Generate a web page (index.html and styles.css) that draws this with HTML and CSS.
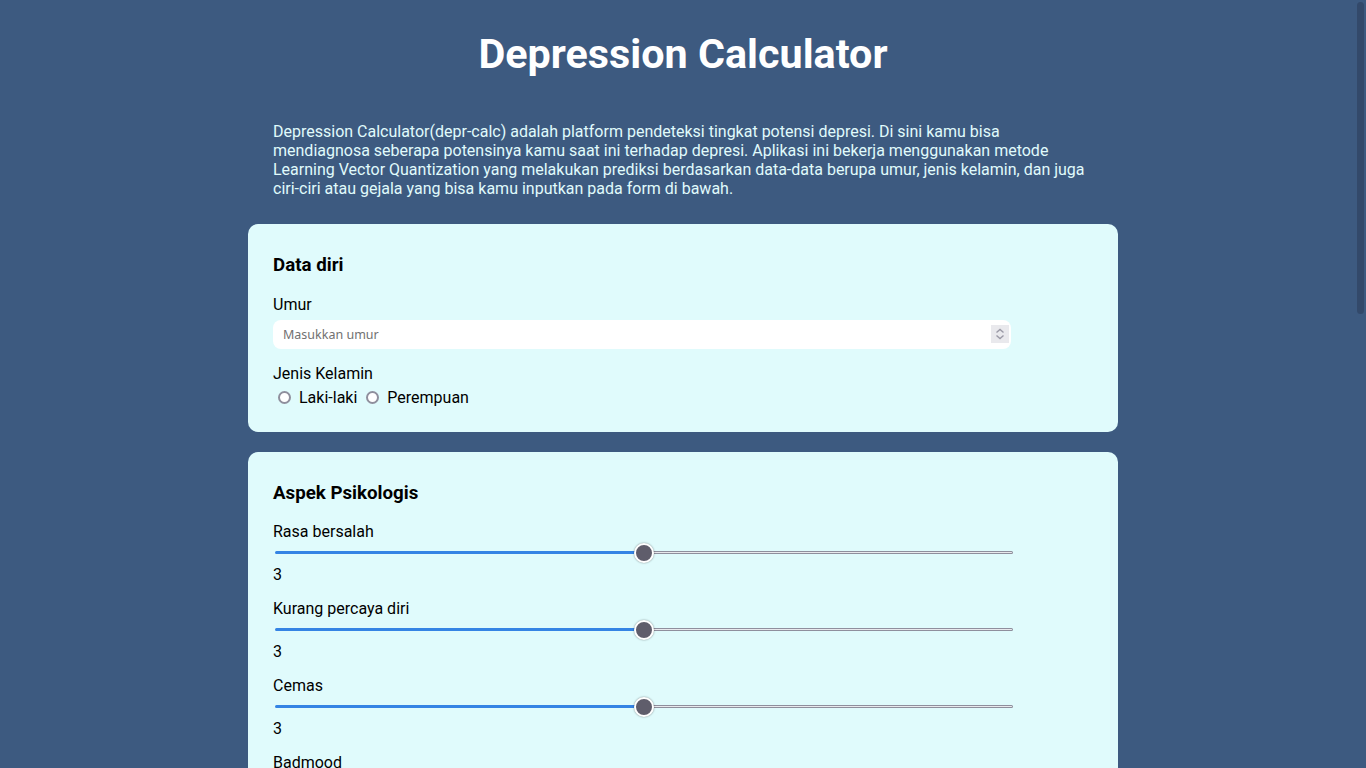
FILE: index.html
```html
<!DOCTYPE html>
<html lang="id">
<head>
<meta charset="utf-8">
<title>Depression Calculator</title>
<link rel="stylesheet" href="styles.css">
</head>
<body>
<div class="container">
  <h1 class="title">Depression Calculator</h1>
  <p class="intro">Depression Calculator(depr-calc) adalah platform pendeteksi tingkat potensi depresi. Di sini kamu bisa mendiagnosa seberapa potensinya kamu saat ini terhadap depresi. Aplikasi ini bekerja menggunakan metode Learning Vector Quantization yang melakukan prediksi berdasarkan data-data berupa umur, jenis kelamin, dan juga ciri-ciri atau gejala yang bisa kamu inputkan pada form di bawah.</p>

  <section class="card">
    <h3 class="card-title card-title-form">Data diri</h3>
    <div class="field">
      <label class="label" for="umur">Umur</label>
      <div class="num-wrap">
        <input class="num" id="umur" type="number" placeholder="Masukkan umur">
        <span class="spin">
          <svg width="18" height="18" viewBox="0 0 18 18"><path d="M5.5 7.5 L9 4.5 L12.5 7.5" fill="none" stroke="#9a99a6" stroke-width="1.4"/><path d="M5.5 10.5 L9 13.5 L12.5 10.5" fill="none" stroke="#9a99a6" stroke-width="1.4"/></svg>
        </span>
      </div>
    </div>
    <div class="field last">
      <div class="label">Jenis Kelamin</div>
      <div class="radios">
        <label class="radio"><input type="radio" name="jk"> Laki-laki</label>
        <label class="radio"><input type="radio" name="jk"> Perempuan</label>
      </div>
    </div>
  </section>

  <section class="card">
    <h3 class="card-title">Aspek Psikologis</h3>
    <div class="slider-field">
      <label class="label">Rasa bersalah</label>
      <input class="range" type="range" min="1" max="5" value="3">
      <div class="value">3</div>
    </div>
    <div class="slider-field">
      <label class="label">Kurang percaya diri</label>
      <input class="range" type="range" min="1" max="5" value="3">
      <div class="value">3</div>
    </div>
    <div class="slider-field">
      <label class="label">Cemas</label>
      <input class="range" type="range" min="1" max="5" value="3">
      <div class="value">3</div>
    </div>
    <div class="slider-field">
      <label class="label">Badmood</label>
      <input class="range" type="range" min="1" max="5" value="3">
      <div class="value">3</div>
    </div>
    <div class="slider-field">
      <label class="label">Sedih</label>
      <input class="range" type="range" min="1" max="5" value="3">
      <div class="value">3</div>
    </div>
  </section>
</div>
<div class="scroll-thumb"></div>
</body>
</html>
```
FILE: styles.css
```css
html {
  overflow: hidden;
  height: 100%;
}
body {
  margin: 0;
  background: #3d5a80;
  font-family: Roboto, "Liberation Sans", sans-serif;
  font-size: 16px;
  color: #000;
}
.container {
  width: 870px;
  margin: 0 auto;
}
.title {
  margin: 31px 0 0;
  font-size: 41.3px;
  font-weight: 700;
  line-height: 47px;
  text-align: center;
  color: #ffffff;
}
.intro {
  margin: 44px 0 0;
  padding: 0 25px;
  color: #e0fbfc;
  line-height: normal;
}
.card {
  margin-top: 25.5px;
  background: #e0fbfc;
  border-radius: 10px;
  padding: 30px 25px 24px;
}
.card + .card {
  margin-top: 20px;
}
.card-title {
  margin: 0 0 18px;
  font-size: 18.72px;
  font-weight: 700;
  line-height: normal;
}
.card-title-form {
  margin-bottom: 19px;
}
.label {
  display: block;
  line-height: normal;
}
.field {
  margin-bottom: 15px;
}
.field.last {
  margin-bottom: 0;
}
.num-wrap {
  position: relative;
  width: 738px;
  margin-top: 6px;
}
.num {
  display: block;
  box-sizing: border-box;
  width: 738px;
  height: 29px;
  border: none;
  border-radius: 8px;
  background: #fff;
  padding: 0 10px;
  font-family: "Noto Sans", "Open Sans", sans-serif;
  font-size: 12.5px;
  color: #000;
  outline: none;
  -moz-appearance: textfield;
  appearance: textfield;
}
.num::-webkit-inner-spin-button,
.num::-webkit-outer-spin-button {
  -webkit-appearance: none;
  margin: 0;
}
.num::placeholder {
  color: #717171;
}
.spin {
  position: absolute;
  right: 2px;
  top: 5.5px;
  width: 18px;
  height: 18px;
  background: #e9e9ed;
  display: flex;
}
.radios {
  display: flex;
  align-items: center;
  gap: 4px;
  margin-top: 5px;
  height: 20px;
}
.radio {
  display: flex;
  align-items: center;
  line-height: normal;
}
.radio input {
  appearance: none;
  -webkit-appearance: none;
  box-sizing: border-box;
  width: 13px;
  height: 13px;
  margin: 0 8px 0 5px;
  border: 2px solid #8f8f9d;
  border-radius: 50%;
  background: #fff;
}
.slider-field {
  margin-bottom: 15px;
}
.range {
  -webkit-appearance: none;
  appearance: none;
  display: block;
  width: 738px;
  height: 20px;
  margin: 2px;
  background: transparent;
}
.range::-webkit-slider-runnable-track {
  height: 3px;
  border: 1px solid transparent;
  border-radius: 3px;
  background:
    linear-gradient(to right, #3584e4 50%, transparent 50%) border-box,
    linear-gradient(#e9e9ed, #e9e9ed) padding-box,
    linear-gradient(#8f8f9d, #8f8f9d) border-box;
}
.range::-webkit-slider-thumb {
  -webkit-appearance: none;
  box-sizing: border-box;
  width: 20px;
  height: 20px;
  margin-top: -9.5px;
  border-radius: 50%;
  background: #5f5d6b;
  border: 2px solid #fff;
  box-shadow: 0 0 2px rgba(0, 0, 0, 0.45);
}
.value {
  line-height: normal;
}
.scroll-thumb {
  position: fixed;
  top: 2px;
  right: 2px;
  width: 7px;
  height: 312px;
  border-radius: 4px;
  background: #33496a;
}
```
